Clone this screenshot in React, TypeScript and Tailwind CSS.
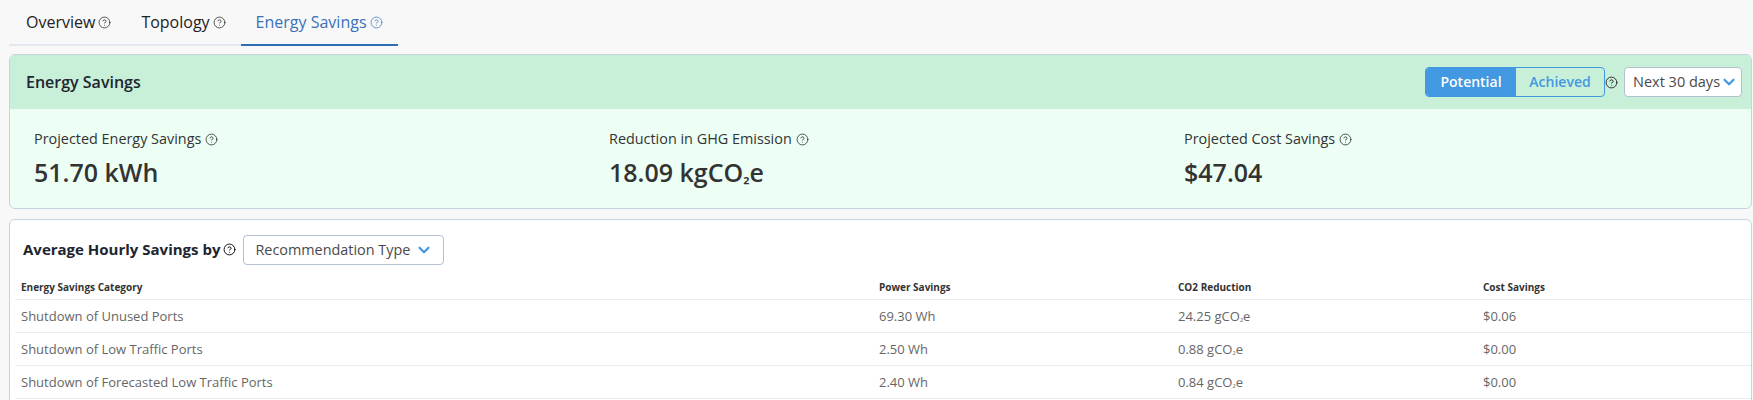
import { ChevronDown, CircleHelp } from "lucide-react";

const metrics = [
  { label: "Projected Energy Savings", value: <>51.70 kWh</> },
  { label: "Reduction in GHG Emission", value: <Co2 amount="18.09 kg" /> },
  { label: "Projected Cost Savings", value: <>$47.04</> },
];

const rows = [
  { name: "Shutdown of Unused Ports", power: "69.30 Wh", co2: "24.25 g", cost: "$0.06" },
  { name: "Shutdown of Low Traffic Ports", power: "2.50 Wh", co2: "0.88 g", cost: "$0.00" },
  { name: "Shutdown of Forecasted Low Traffic Ports", power: "2.40 Wh", co2: "0.84 g", cost: "$0.00" },
];

function Co2({ amount }: { amount: string }) {
  return (
    <>
      {amount}CO<span className="text-[0.7em]">₂</span>e
    </>
  );
}

function Help({ className = "text-[#444]" }: { className?: string }) {
  return <CircleHelp size={13} strokeWidth={1.7} className={`shrink-0 ${className}`} />;
}

export default function App() {
  return (
    <div className="h-[400px] overflow-hidden bg-[#f8f8f9] pl-[9px] pr-px font-['Open_Sans',sans-serif]">
      <div className="flex h-[46px] items-stretch">
        <div className="flex items-center gap-[3px] border-b-2 border-[#e3e8f0] pl-[17px] pr-[15px] text-base text-[#222]">
          Overview <Help />
        </div>
        <div className="flex items-center gap-[3px] border-b-2 border-[#e3e8f0] px-[15px] text-base text-[#222]">
          Topology <Help />
        </div>
        <div className="flex items-center gap-[3px] border-b-2 border-[#2f6db5] px-[15px] text-base text-[#3a72b8]">
          Energy Savings <Help className="text-[#5b8cc8]" />
        </div>
      </div>

      <section className="mt-2 h-[155px] overflow-hidden rounded-md border border-[#c9d3e0] bg-[#edfff5]">
        <div className="flex h-[54px] items-center bg-[#c8efd7] pl-4 pr-[9px]">
          <h2 className="text-base font-semibold text-[#1d2530]">Energy Savings</h2>
          <div className="ml-auto flex items-center">
            <div className="flex h-[30px] w-[180px] overflow-hidden rounded border border-[#4299e1] text-sm font-semibold">
              <span className="flex w-[90px] items-center justify-center bg-[#4299e1] text-white">Potential</span>
              <span className="flex flex-1 items-center justify-center text-[#4299e1]">Achieved</span>
            </div>
            <Help className="text-[#222]" />
            <div className="ml-[6px] flex h-[30px] w-[118px] items-center rounded border border-[#b4bfd0] bg-white pl-2 text-[14.5px] whitespace-nowrap text-[#4a4a4a]">
              Next 30 days
              <ChevronDown size={18} strokeWidth={3} className="shrink-0 text-[#4299e1]" />
            </div>
          </div>
        </div>
        <div className="grid grid-cols-[575px_575px_1fr] pl-6 pt-[20px]">
          {metrics.map((m) => (
            <div key={m.label}>
              <div className="flex items-center gap-[4px] text-[14.4px] leading-5 text-[#333]">
                {m.label} <Help />
              </div>
              <div className="mt-[7px] text-[25px] leading-8 font-semibold text-[#333]">{m.value}</div>
            </div>
          ))}
        </div>
      </section>

      <section className="mt-[10px] h-[200px] rounded-t-md border border-[#c9d3e0] bg-white pl-[5px]">
        <div className="flex h-[50px] items-center pl-[8px] pt-[9px]">
          <span className="text-[15px] font-bold text-[#1d2530]">Average Hourly Savings by</span>
          <Help className="ml-[3px]" />
          <div className="ml-[7px] flex h-[30px] w-[201px] items-center gap-[5px] rounded border border-[#b4bfd0] bg-white pl-[11px] text-[14.4px] whitespace-nowrap text-[#4a4a4a]">
            Recommendation Type
            <ChevronDown size={18} strokeWidth={3} className="shrink-0 text-[#4299e1]" />
          </div>
        </div>
        <table className="w-full table-fixed text-left">
          <thead>
            <tr className="h-[29px] border-b border-[#e8edf3] text-[10px] text-[#333]">
              <th className="w-[864px] pl-[6px] pt-[6px] font-bold">Energy Savings Category</th>
              <th className="w-[299px] pt-[6px] font-bold">Power Savings</th>
              <th className="w-[305px] pt-[6px] font-bold">CO2 Reduction</th>
              <th className="pt-[6px] font-bold">Cost Savings</th>
            </tr>
          </thead>
          <tbody>
            {rows.map((r) => (
              <tr key={r.name} className="h-[33px] border-b border-[#e8edf3] text-[13px] text-[#666]">
                <td className="pl-[6px] pt-[2px]">{r.name}</td>
                <td className="pt-[2px]">{r.power}</td>
                <td className="pt-[2px]">
                  <Co2 amount={r.co2} />
                </td>
                <td className="pt-[2px]">{r.cost}</td>
              </tr>
            ))}
          </tbody>
        </table>
      </section>
    </div>
  );
}
